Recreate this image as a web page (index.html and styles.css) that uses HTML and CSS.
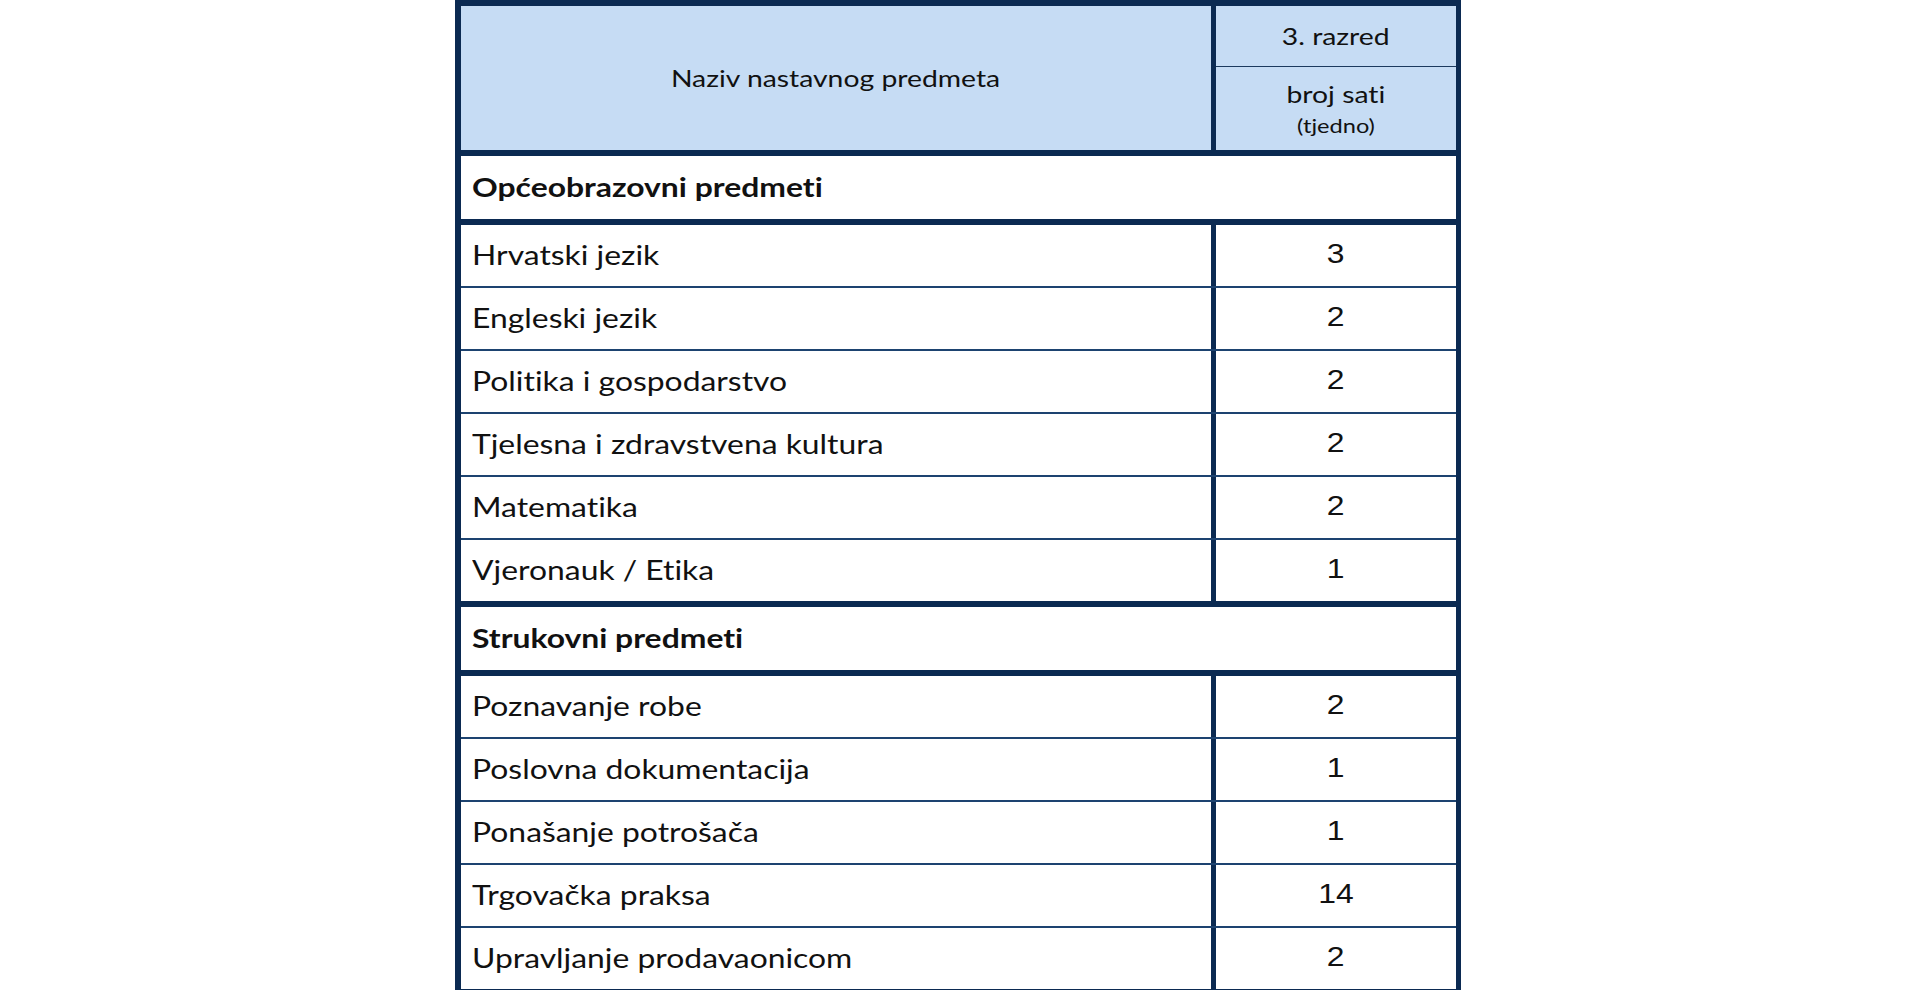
FILE: index.html
```html
<!DOCTYPE html>
<html lang="hr">
<head>
<meta charset="utf-8">
<title>Nastavni plan</title>
<link rel="stylesheet" href="styles.css">
</head>
<body>
<div class="page">
  <div class="plan">
    <div class="head">
      <div class="head-name"><span class="t c">Naziv nastavnog predmeta</span></div>
      <div class="head-grade">
        <div class="grade-title"><span class="t c">3. razred</span></div>
        <div class="grade-sub"><span class="t c sub-main">broj sati</span><span class="t c sub-small">(tjedno)</span></div>
      </div>
    </div>

    <div class="section"><span class="t">Općeobrazovni predmeti</span></div>
    <div class="group">
      <div class="row"><div class="name"><span class="t">Hrvatski jezik</span></div><div class="hours"><span class="t c">3</span></div></div>
      <div class="row"><div class="name"><span class="t">Engleski jezik</span></div><div class="hours"><span class="t c">2</span></div></div>
      <div class="row"><div class="name"><span class="t">Politika i gospodarstvo</span></div><div class="hours"><span class="t c">2</span></div></div>
      <div class="row"><div class="name"><span class="t">Tjelesna i zdravstvena kultura</span></div><div class="hours"><span class="t c">2</span></div></div>
      <div class="row"><div class="name"><span class="t">Matematika</span></div><div class="hours"><span class="t c">2</span></div></div>
      <div class="row"><div class="name"><span class="t">Vjeronauk / Etika</span></div><div class="hours"><span class="t c">1</span></div></div>
    </div>

    <div class="section"><span class="t">Strukovni predmeti</span></div>
    <div class="group last">
      <div class="row"><div class="name"><span class="t">Poznavanje robe</span></div><div class="hours"><span class="t c">2</span></div></div>
      <div class="row"><div class="name"><span class="t">Poslovna dokumentacija</span></div><div class="hours"><span class="t c">1</span></div></div>
      <div class="row"><div class="name"><span class="t">Ponašanje potrošača</span></div><div class="hours"><span class="t c">1</span></div></div>
      <div class="row"><div class="name"><span class="t">Trgovačka praksa</span></div><div class="hours"><span class="t c">14</span></div></div>
      <div class="row"><div class="name"><span class="t">Upravljanje prodavaonicom</span></div><div class="hours"><span class="t c">2</span></div></div>
    </div>
  </div>
</div>
</body>
</html>
```

FILE: styles.css
```css
html, body {
  margin: 0;
  padding: 0;
  background: #ffffff;
}

body {
  font-family: Lato, "Open Sans", "Liberation Sans", sans-serif;
  font-variant-ligatures: none;
  color: #111111;
}

.page {
  display: flex;
  justify-content: center;
  padding-right: 4px;
}

.plan {
  width: 1006px;
  box-sizing: border-box;
  border: 6px solid #0b2a52;
  border-right-width: 5px;
  border-bottom-width: 5px;
  display: flex;
  flex-direction: column;
}

/* the source text is horizontally stretched */
.t {
  display: inline-block;
  white-space: nowrap;
  transform: scaleX(1.18);
  transform-origin: left center;
}

.t.c {
  transform-origin: center center;
}

.head {
  display: flex;
  height: 144px;
  background: #c6dcf4;
  border-bottom: 6px solid #0b2a52;
}

.head-name {
  width: 755px;
  flex: none;
  display: flex;
  align-items: center;
  justify-content: center;
  font-size: 24px;
  border-right: 5px solid #0b2a52;
  padding-bottom: 2px;
  box-sizing: border-box;
}

.head-grade {
  flex: 1;
  display: flex;
  flex-direction: column;
}

.grade-title {
  height: 61px;
  display: flex;
  align-items: center;
  justify-content: center;
  font-size: 24px;
  border-bottom: 1px solid #1c3a5e;
  padding-bottom: 2px;
  box-sizing: border-box;
}

.grade-sub {
  flex: 1;
  display: flex;
  flex-direction: column;
  align-items: center;
  justify-content: center;
}

.sub-main {
  font-size: 24px;
  line-height: 28px;
}

.sub-small {
  font-size: 20px;
  line-height: 24px;
  margin-top: 5px;
}

.section {
  height: 61px;
  display: flex;
  align-items: center;
  padding-left: 11px;
  font-size: 27px;
  font-weight: 700;
  border-bottom: 6px solid #0b2a52;
  padding-bottom: 2px;
}

.group {
  display: flex;
  flex-direction: column;
  border-bottom: 6px solid #0b2a52;
}

.group.last {
  border-bottom: none;
}

.row {
  display: flex;
  height: 61px;
  border-bottom: 2px solid #1d4370;
}

.row:last-child {
  border-bottom: none;
}

.name {
  width: 755px;
  flex: none;
  box-sizing: border-box;
  display: flex;
  align-items: center;
  padding-left: 11px;
  padding-bottom: 2px;
  font-size: 27px;
  border-right: 5px solid #0b2a52;
}

.hours {
  flex: 1;
  display: flex;
  align-items: center;
  justify-content: center;
  font-family: "Liberation Sans", Arial, sans-serif;
  font-size: 27px;
  padding-bottom: 2px;
}
```
